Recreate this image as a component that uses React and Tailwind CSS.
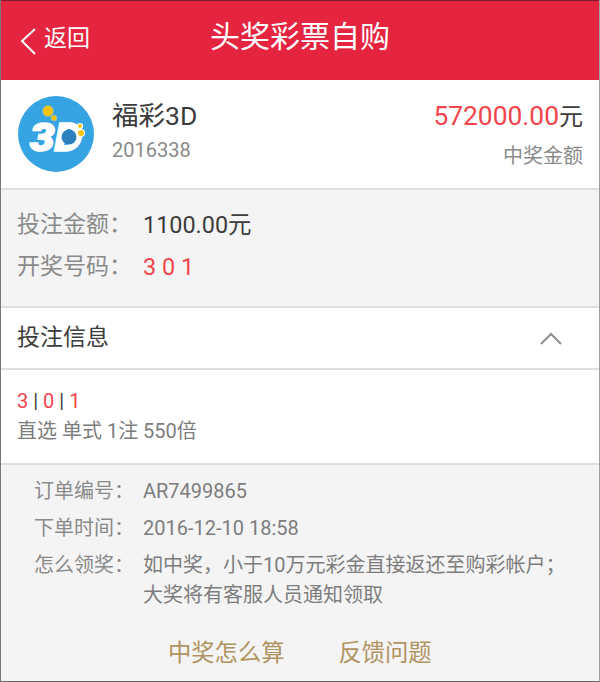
const FONT = '[font-family:Roboto,"Noto_Sans_CJK_SC",sans-serif]';
const COLON = "\uFF1A";

function Logo() {
  return (
    <svg width="76" height="76" viewBox="0 0 76 76" className="shrink-0">
      <circle cx="38" cy="38" r="38" fill="#36a3e3" />
      <circle cx="30" cy="15" r="5.5" fill="#f5c20d" stroke="#7cc0e0" strokeWidth="0.8" />
      <circle cx="36" cy="22" r="3" fill="#f5c20d" stroke="#7cc0e0" strokeWidth="0.6" />
      <text x="12" y="55" textLength="52" lengthAdjust="spacingAndGlyphs" fill="#fff" fontSize="38" fontWeight="900" fontStyle="italic" fontFamily="Roboto, sans-serif" stroke="#fff" strokeWidth="1.6">3D</text>
      <circle cx="51" cy="41" r="7.5" fill="#2b80bd" />
      <circle cx="62" cy="30" r="2.5" fill="#f5c20d" stroke="#fff" strokeWidth="1.2" />
      <circle cx="63" cy="37" r="3.5" fill="#f5c20d" stroke="#fff" strokeWidth="1.2" />
    </svg>
  );
}

function InfoRow({ label, children, top }) {
  return (
    <div className={`flex ${top}`}>
      <div className="w-[110px] shrink-0 text-[20px] leading-[30px] text-[#8a8a8a] whitespace-nowrap">{label}{COLON}</div>
      <div className="-ml-px text-[20px] leading-[30px] text-[#7d7d7d] whitespace-nowrap">{children}</div>
    </div>
  );
}

export default function App() {
  return (
    <div className={`w-[600px] h-[682px] overflow-hidden bg-[#f4f4f4] border-l border-r border-b border-l-[#777777] border-r-[#a0a0a0] border-b-[#666666] ${FONT}`}>
      <header className="relative h-[80px] bg-[#e52440] border-t border-[#7a1c2c] flex items-center text-white">
        <div className="flex items-center pl-[18px] -mt-1">
          <svg width="20" height="28" viewBox="0 0 20 28" fill="none" stroke="#fff" strokeWidth="2" className="mt-1">
            <path d="M16 2 L3 14 L16 27" />
          </svg>
          <span className="ml-[5px] text-[23px] leading-[30px]">返回</span>
        </div>
        <h1 className="absolute left-[209px] top-[18px] text-[30px] leading-[36px] font-normal whitespace-nowrap">头奖彩票自购</h1>
      </header>

      <section className="h-[110px] bg-white border-b-2 border-[#dedede] flex items-center justify-between pl-[17px] pr-[16px]">
        <div className="flex items-center -mt-[1px]">
          <Logo />
          <div className="ml-[18px] -mt-[3px]">
            <div className="text-[26.5px] leading-[32px] text-[#3c3c3c]">福彩3D</div>
            <div className="text-[20px] leading-[28px] mt-[4px] text-[#8a8a8a]">2016338</div>
          </div>
        </div>
        <div className="text-right">
          <div className="leading-[34px] whitespace-nowrap">
            <span className="text-[26.4px] text-[#f2444b]">572000.00</span>
            <span className="text-[24px] text-[#3c3c3c]">元</span>
          </div>
          <div className="text-[20px] leading-[28px] mt-[5px] text-[#8a8a8a]">中奖金额</div>
        </div>
      </section>

      <section className="h-[118px] border-b-2 border-[#dedede] px-[16px] pt-[17px]">
        <div className="flex text-[23px] leading-[36px]">
          <span className="w-[126px] text-[#8a8a8a]">投注金额{COLON}</span>
          <span className="text-[23.4px] text-[#3c3c3c]">1100.00元</span>
        </div>
        <div className="flex text-[23px] leading-[36px] mt-[6px]">
          <span className="w-[126px] text-[#8a8a8a]">开奖号码{COLON}</span>
          <span className="text-[23.4px] text-[#f2444b]">3 0 1</span>
        </div>
      </section>

      <section className="h-[62px] bg-white border-b-2 border-[#dedede] flex items-center justify-between pl-[16px] pr-[37px]">
        <span className="text-[23px] text-[#3c3c3c]">投注信息</span>
        <svg width="22" height="13" viewBox="0 0 22 13" fill="none" stroke="#8f8f8f" strokeWidth="2">
          <path d="M1 12 L11 2 L21 12" />
        </svg>
      </section>

      <section className="h-[95px] bg-white border-b-2 border-[#dedede] pl-[16px] pt-[17px]">
        <div className="text-[20px] leading-[28px] text-[#3c3c3c]">
          <span className="text-[#f2444b]">3</span> | <span className="text-[#f2444b]">0</span> | <span className="text-[#f2444b]">1</span>
        </div>
        <div className="text-[20px] leading-[30px] mt-[1px] text-[#7d7d7d]">直选 单式 1注 550倍</div>
      </section>

      <section className="pl-[33px] pr-[30px] pt-[11px]">
        <InfoRow label="订单编号" top="">AR7499865</InfoRow>
        <InfoRow label="下单时间" top="mt-[7px]">2016-12-10 18:58</InfoRow>
        <InfoRow label="怎么领奖" top="mt-[7px]">{"如中奖\uFF0C小于10万元彩金直接返还至购彩帐户\uFF1B"}<br />大奖将有客服人员通知领取</InfoRow>
        <div className="flex text-[23.3px] leading-[32px] text-[#b0935f] mt-[27px] pl-[134px] whitespace-nowrap">
          <span>中奖怎么算</span>
          <span className="ml-[54px]">反馈问题</span>
        </div>
      </section>
    </div>
  );
}
